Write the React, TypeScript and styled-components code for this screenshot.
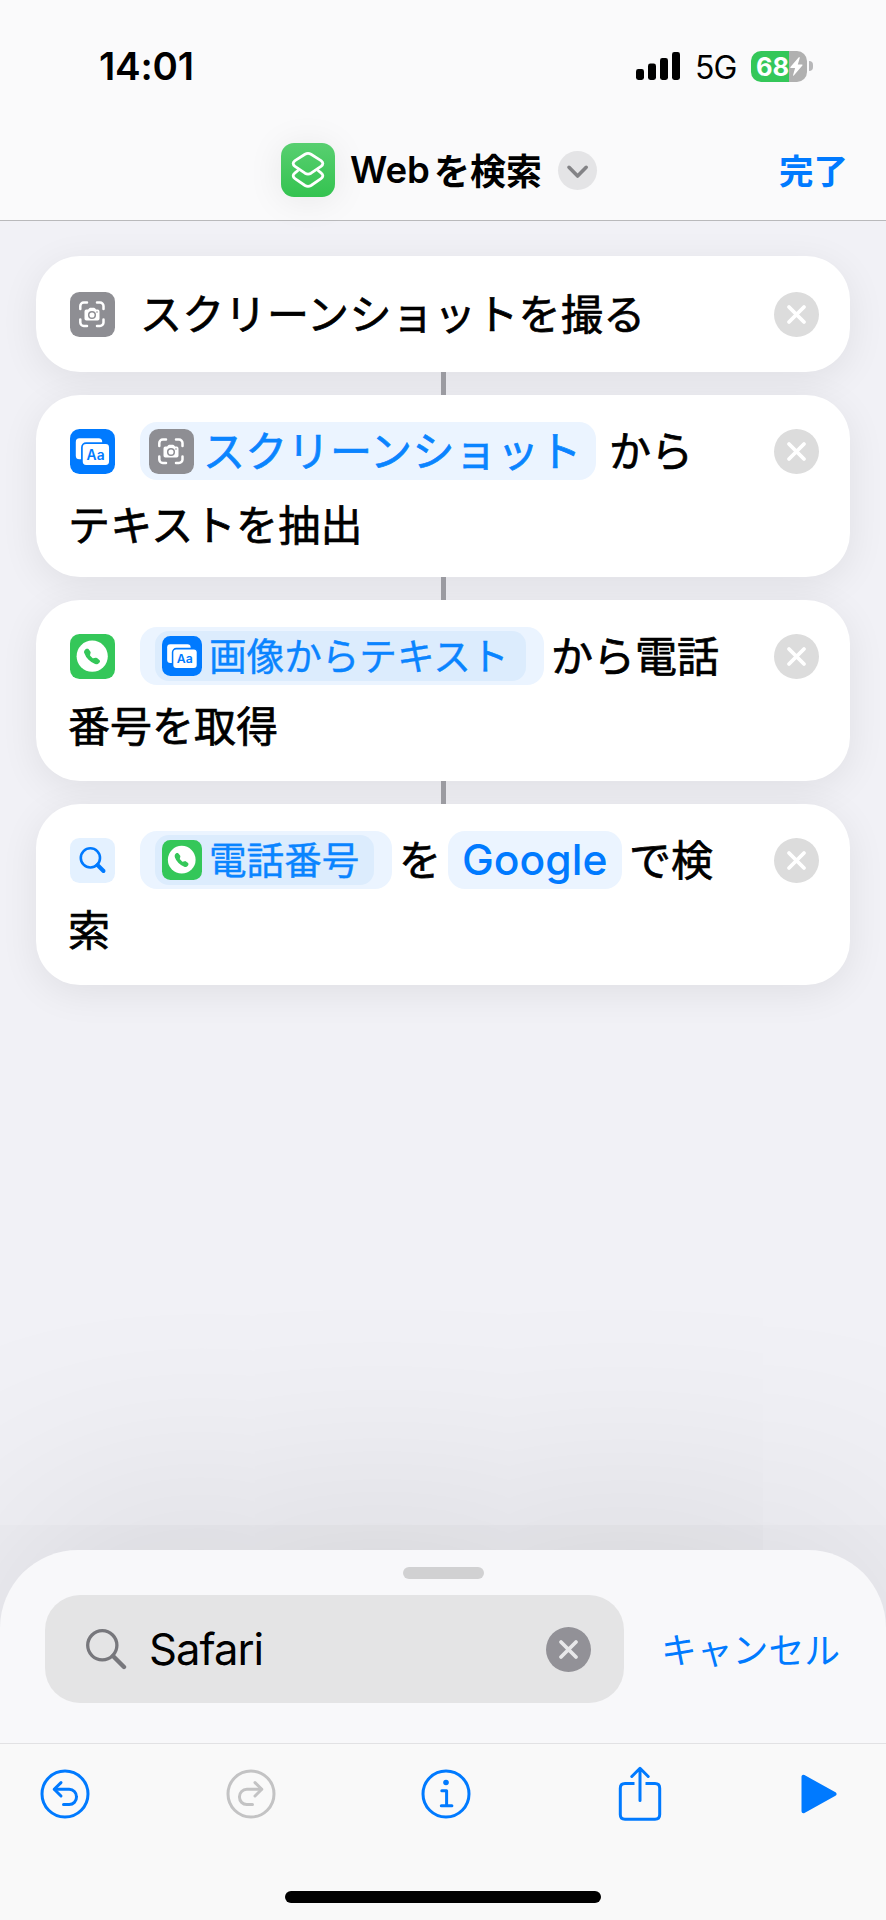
import React from "react";
import styled, { createGlobalStyle } from "styled-components";
import { BsTelephoneFill } from "react-icons/bs";

const BLUE = "#007aff";
const GREEN = "#34c759";

const GlobalStyle = createGlobalStyle`
  * { box-sizing: border-box; }
  body { margin: 0; background: #f1f1f6; }
  svg { display: block; flex: none; }
`;

const Screen = styled.div`
  width: 886px;
  height: 1920px;
  display: flex;
  flex-direction: column;
  overflow: hidden;
  background: #f1f1f6;
  color: #000;
  font-family: Inter, "Noto Sans CJK JP", sans-serif;
`;

const Header = styled.header`
  height: 221px;
  flex: none;
  background: #fafafb;
  border-bottom: 1px solid #b9b9bb;
`;

const StatusBar = styled.div`
  height: 132px;
  padding: 0 73px 0 99px;
  display: flex;
  align-items: center;
`;

const Clock = styled.div`
  font-size: 38.5px;
  font-weight: 600;
  letter-spacing: -0.2px;
  margin-right: auto;
`;

const Network = styled.div`
  font-size: 32px;
  margin: 3px 0 0 15px;
  width: 56px;
  letter-spacing: -1px;
`;

const Battery = styled.div`
  width: 56px;
  height: 31px;
  border-radius: 10px;
  display: flex;
  align-items: center;
  padding-left: 5px;
  background: linear-gradient(90deg, ${GREEN} 38px, #b0b0b0 38px);
  color: #fff;
  font-size: 25.5px;
  font-weight: 700;
`;

const BatteryNub = styled.div`
  width: 4px;
  height: 10px;
  margin-left: 2px;
  border-radius: 0 4px 4px 0;
  background: #b7b7b9;
`;

const TitleBar = styled.div`
  height: 76px;
  padding: 0 38px 0 281px;
  display: flex;
  align-items: center;
`;

const AppIcon = styled.div`
  width: 54px;
  height: 54px;
  border-radius: 13px;
  background: linear-gradient(#58cf70, #34c350);
  box-shadow: 0 3px 36px rgba(0, 0, 0, 0.08);
`;

const Title = styled.div`
  display: flex;
  align-items: center;
  gap: 4px;
  width: 207px;
  margin-left: 15px;
  font-size: 36px;
  font-weight: 600;
  white-space: nowrap;
`;

const Latin = styled.span`
  font-size: 36.6px;
`;

const Kana = styled.span`
  padding-bottom: 3px;
`;

const Chevron = styled.div`
  width: 39px;
  height: 39px;
  margin-left: 1px;
  border-radius: 50%;
  background: #e4e4e6;
`;

const Done = styled.div`
  margin-left: auto;
  padding-bottom: 3px;
  color: ${BLUE};
  font-size: 34.5px;
  font-weight: 600;
`;

const Actions = styled.main`
  flex: 1;
  padding: 35px 36px 0;
  display: flex;
  flex-direction: column;
  align-items: center;
`;

const Card = styled.section<{ $h: number; $top: number }>`
  width: 814px;
  height: ${(p) => p.$h}px;
  padding: ${(p) => p.$top}px 31px 0 34px;
  flex: none;
  display: flex;
  justify-content: space-between;
  border-radius: 44px;
  background: #fff;
  box-shadow: 0 8px 38px rgba(0, 0, 0, 0.075);
`;

const Connector = styled.div`
  width: 5px;
  height: 23px;
  flex: none;
  position: relative;
  background: #9b9ba1;
`;

const Line = styled.div`
  height: 58px;
  display: flex;
  align-items: center;
  font-size: 42px;
  line-height: 58px;
  white-space: nowrap;
  -webkit-text-stroke: 0.7px currentColor;
`;

const WrappedLine = styled(Line)<{ $gap: number; $tracking?: number }>`
  margin: ${(p) => p.$gap}px 0 0 -2px;
  letter-spacing: ${(p) => p.$tracking ?? 0}px;
`;

const Label = styled.span<{ $left?: number; $tracking?: number }>`
  margin-left: ${(p) => p.$left ?? 0}px;
  padding-top: 1px;
  letter-spacing: ${(p) => p.$tracking ?? 0}px;
`;

const Pill = styled.span<{ $w: number; $left: number; $pad: number }>`
  width: ${(p) => p.$w}px;
  height: 58px;
  margin-left: ${(p) => p.$left}px;
  padding-left: ${(p) => p.$pad}px;
  display: flex;
  align-items: center;
  border-radius: 17px;
  background: #ebf4ff;
  color: #0a84ff;
`;

const Token = styled.span<{ $w: number }>`
  width: ${(p) => p.$w}px;
  height: 50px;
  padding-left: 7px;
  display: flex;
  align-items: center;
  gap: 7px;
  border-radius: 14px;
  background: #dcecfd;
  font-size: 37.6px;
  -webkit-text-stroke: 0.4px currentColor;
`;

const TokenText = styled.span`
  padding-top: 2px;
`;

const Engine = styled.span`
  color: ${BLUE};
  font-size: 42.6px;
  font-weight: 500;
  -webkit-text-stroke: 0;
`;

const RemoveSlot = styled.div`
  height: 58px;
  display: flex;
  align-items: center;
`;

const Sheet = styled.section`
  height: 193px;
  flex: none;
  position: relative;
  border-radius: 78px 78px 0 0;
  background: #f8f8fa;
  box-shadow: 0 0 250px rgba(0, 0, 0, 0.19);
`;

const Grabber = styled.div`
  width: 81px;
  height: 12px;
  margin: 0 auto;
  position: relative;
  top: 17px;
  border-radius: 6px;
  background: #d1d1d2;
`;

const SearchRow = styled.div`
  padding: 33px 0 0 45px;
  display: flex;
  align-items: center;
`;

const SearchField = styled.div`
  width: 579px;
  height: 108px;
  padding: 0 33px 0 41px;
  display: flex;
  align-items: center;
  border-radius: 35px;
  background: #e4e4e5;
  font-size: 43.6px;
  letter-spacing: -1px;
`;

const Query = styled.span`
  margin: 0 auto 0 22px;
`;

const Cancel = styled.div`
  margin-left: 37px;
  padding-bottom: 3px;
  color: ${BLUE};
  font-size: 35.8px;
`;

const Toolbar = styled.nav`
  height: 177px;
  flex: none;
  position: relative;
  padding: 21px 49px 0 40px;
  border-top: 1px solid #e2e2e4;
  background: #f9f9f9;
`;

const Tools = styled.div`
  display: grid;
  grid-template-columns: 185.5px 195px 197.5px 183px 36px;
  align-items: center;
  height: 58px;
`;

const HomeBar = styled.div`
  width: 316px;
  height: 12px;
  margin: 68px 0 0 245px;
  border-radius: 6px;
  background: #000;
`;

const CrossCircle = ({ fill, stroke }: { fill: string; stroke: string }) => (
  <svg width="45" height="45" viewBox="0 0 45 45">
    <circle cx="22.5" cy="22.5" r="22.5" fill={fill} />
    <path d="M15 15 30 30M30 15 15 30" stroke={stroke} strokeWidth="3.8" strokeLinecap="round" />
  </svg>
);

const Remove = () => (
  <RemoveSlot>
    <CrossCircle fill="#dcdcdc" stroke="#fff" />
  </RemoveSlot>
);

const CameraIcon = () => (
  <svg width="45" height="45" viewBox="0 0 45 45">
    <rect width="45" height="45" rx="9.5" fill="#8e8e93" />
    <path
      d="M10.3 17V14a3.5 3.5 0 0 1 3.5-3.5H17M27 10.5h3a3.5 3.5 0 0 1 3.5 3.5v3M33.5 27.5v3A3.5 3.5 0 0 1 30 34h-3M17 34h-3.2a3.5 3.5 0 0 1-3.5-3.5v-3"
      fill="none"
      stroke="#fff"
      strokeWidth="2.5"
      strokeLinecap="round"
    />
    <path
      d="M16.3 17.6h1.8l1.1-1.3q.4-.5 1-.5h3.8q.6 0 1 .5l1.1 1.3h1.6q1.8 0 1.8 1.8v7.4q0 1.800-1.8 1.800H16.300q-1.800 0-1.800-1.800v-7.400q0-1.800 1.800-1.800z"
      fill="#fff"
    />
    <circle cx="22" cy="23" r="3.3" fill="none" stroke="#8e8e93" strokeWidth="1.5" />
    <circle cx="27" cy="20" r=".8" fill="#8e8e93" />
  </svg>
);

const TextIcon = ({ size = 45 }: { size?: number }) => (
  <svg width={size} height={size} viewBox="0 0 45 45">
    <rect width="45" height="45" rx="9.5" fill={BLUE} />
    <rect x="5.8" y="9.3" width="26.4" height="21" rx="3.6" fill="#fff" />
    <rect x="11.9" y="14.2" width="28" height="22.6" rx="4.2" fill="#fff" stroke={BLUE} strokeWidth="1.7" />
    <text x="25.6" y="30.5" textAnchor="middle" fontFamily="Inter" fontSize="13.8" fontWeight="600" fill={BLUE} stroke="none">
      Aa
    </text>
  </svg>
);

const PhoneIcon = ({ size = 45 }: { size?: number }) => (
  <svg width={size} height={size} viewBox="0 0 45 45">
    <rect width="45" height="45" rx="9.5" fill={GREEN} />
    <circle cx="22.2" cy="22.2" r="15.6" fill="#fff" />
    <BsTelephoneFill x="14" y="14.4" size={16} color={GREEN} />
  </svg>
);

const WebSearchIcon = () => (
  <svg width="45" height="45" viewBox="0 0 45 45">
    <rect width="45" height="45" rx="9.5" fill="#e4f1ff" />
    <circle cx="20.4" cy="19.9" r="9.6" fill="none" stroke={BLUE} strokeWidth="2.6" />
    <path d="m27.5 27 6 6" stroke={BLUE} strokeWidth="4" strokeLinecap="round" />
  </svg>
);

const SignalBars = () => (
  <svg width="44" height="28" viewBox="0 0 44 28">
    <rect x="0" y="17" width="8" height="11" rx="2.4" />
    <rect x="12" y="11.5" width="8" height="16.5" rx="2.4" />
    <rect x="24" y="6" width="8" height="22" rx="2.4" />
    <rect x="36" y="0" width="8" height="28" rx="2.4" />
  </svg>
);

const ArrowCircle = ({ color, flip }: { color: string; flip?: boolean }) => (
  <svg width="50" height="50" viewBox="0 0 50 50" fill="none" stroke={color} strokeWidth="3" strokeLinecap="round" strokeLinejoin="round">
    <circle cx="25" cy="25" r="23" />
    <g transform={flip ? "matrix(-1 0 0 1 50 0)" : undefined}>
      <path d="M21 13.6 14.2 20.3 21 27" />
      <path d="M14.8 20.3H29a7.3 7.3 0 0 1 7.5 7.6A7.3 7.3 0 0 1 29 35.500h-5.500" />
    </g>
  </svg>
);

export default function App() {
  return (
    <Screen>
      <GlobalStyle />
      <Header>
        <StatusBar>
          <Clock>14:01</Clock>
          <SignalBars />
          <Network>5G</Network>
          <Battery>
            68
            <svg width="15" height="21" viewBox="0 0 15 21">
              <path d="M9.8 1.2 1.4 11q-.6.9.5 1h4.2l-2 7q-.3 1.3.7.4l8.6-9.8q.6-.9-.5-1H8.8l1.9-6.4q.2-1.6-.9-1z" fill="#fff" />
            </svg>
          </Battery>
          <BatteryNub />
        </StatusBar>
        <TitleBar>
          <AppIcon>
            <svg width="54" height="54" viewBox="0 0 54 54" fill="none" stroke="#fff" strokeWidth="2.8" strokeLinejoin="round">
              <path d="M24 11.3q3-1.8 6 0l10 6.3q3.7 2.9 0 5.8l-10 6.8q-3 1.8-6 0l-10-6.8q-3.7-2.9 0-5.8z" />
              <path d="M17.5 27 14 29.8q-3.7 3 0 5.9l10 6.8q3 1.8 6 0l10-6.8q3.7-2.9 0-5.9L36.5 27" />
            </svg>
          </AppIcon>
          <Title>
            <Latin>Web</Latin>
            <Kana>を検索</Kana>
          </Title>
          <Chevron>
            <svg width="39" height="39" viewBox="0 0 39 39">
              <path d="m11 16.3 8.6 8.7 8.6-8.7" fill="none" stroke="#838386" strokeWidth="3.6" strokeLinecap="round" strokeLinejoin="round" />
            </svg>
          </Chevron>
          <Done>完了</Done>
        </TitleBar>
      </Header>

      <Actions>
        <Card $h={116} $top={29}>
          <Line>
            <CameraIcon />
            <Label $left={25} $tracking={0.3}>スクリーンショットを撮る</Label>
          </Line>
          <Remove />
        </Card>
        <Connector />
        <Card $h={182} $top={27}>
          <div>
            <Line>
              <TextIcon />
              <Pill $w={456} $left={25} $pad={9}>
                <CameraIcon />
                <Label $left={9} $tracking={0.3}>スクリーンショット</Label>
              </Pill>
              <Label $left={13}>から</Label>
            </Line>
            <WrappedLine $gap={17} $tracking={0.3}>テキストを抽出</WrappedLine>
          </div>
          <Remove />
        </Card>
        <Connector />
        <Card $h={181} $top={27}>
          <div>
            <Line>
              <PhoneIcon />
              <Pill $w={404} $left={25} $pad={15}>
                <Token $w={371}>
                  <TextIcon size={40} />
                  <TokenText>画像からテキスト</TokenText>
                </Token>
              </Pill>
              <Label $left={7}>から電話</Label>
            </Line>
            <WrappedLine $gap={13}>番号を取得</WrappedLine>
          </div>
          <Remove />
        </Card>
        <Connector />
        <Card $h={181} $top={27}>
          <div>
            <Line>
              <WebSearchIcon />
              <Pill $w={252} $left={25} $pad={15}>
                <Token $w={219}>
                  <PhoneIcon size={40} />
                  <TokenText>電話番号</TokenText>
                </Token>
              </Pill>
              <Label $left={7}>を</Label>
              <Pill $w={174} $left={7} $pad={14}>
                <Engine>Google</Engine>
              </Pill>
              <Label $left={7}>で検</Label>
            </Line>
            <WrappedLine $gap={13}>索</WrappedLine>
          </div>
          <Remove />
        </Card>
      </Actions>

      <Sheet>
        <Grabber />
        <SearchRow>
          <SearchField>
            <svg width="41" height="41" viewBox="0 0 41 41" fill="none" stroke="#77777c" strokeLinecap="round">
              <circle cx="16.3" cy="16.3" r="14.6" strokeWidth="3.3" />
              <path d="m27 27 11 11" strokeWidth="4.4" />
            </svg>
            <Query>Safari</Query>
            <CrossCircle fill="#929197" stroke="#e8e8ea" />
          </SearchField>
          <Cancel>キャンセル</Cancel>
        </SearchRow>
      </Sheet>

      <Toolbar>
        <Tools>
          <ArrowCircle color={BLUE} />
          <ArrowCircle color="#c3c3c4" flip />
          <svg width="50" height="50" viewBox="0 0 50 50" fill="none" stroke={BLUE} strokeWidth="3" strokeLinecap="round" strokeLinejoin="round">
            <circle cx="25" cy="25" r="23" />
            <path d="M20.8 21.800h4.800v15M20.300 36.800h10.600" />
            <circle cx="25" cy="13.5" r="2.8" fill={BLUE} stroke="none" />
          </svg>
          <svg width="44" height="56" viewBox="0 0 44 56" fill="none" stroke={BLUE} strokeWidth="3" strokeLinecap="round" strokeLinejoin="round">
            <path d="M16.500 17.500H7q-4.700 0-4.700 4.700v26.300q0 4.700 4.700 4.700h30q4.700 0 4.700-4.700V22.200q0-4.700-4.700-4.700h-9.500" strokeLinecap="butt" />
            <path d="M22 34.500V2.500M13.800 10.500 22 2.300l8.200 8.200" />
          </svg>
          <svg width="36" height="42" viewBox="0 0 36 42">
            <path d="M2.500 3.800v34.400L33.500 21z" fill={BLUE} stroke={BLUE} strokeWidth="4" strokeLinejoin="round" />
          </svg>
        </Tools>
        <HomeBar />
      </Toolbar>
    </Screen>
  );
}
